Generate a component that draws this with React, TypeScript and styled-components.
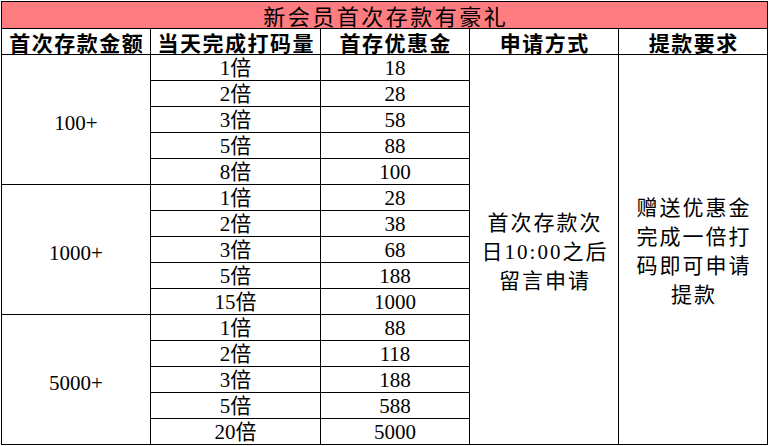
import React from "react";
import styled, { createGlobalStyle } from "styled-components";

const GlobalStyle = createGlobalStyle`
  html, body {
    margin: 0;
    padding: 0;
    background: #ffffff;
  }
  body {
    font-family: "Liberation Serif", "Noto Sans CJK SC", serif;
    color: #000;
  }
`;

const Wrapper = styled.div`
  padding: 1px 0 0 1px;
`;

const Sheet = styled.table`
  border-collapse: separate;
  border-spacing: 0;
  table-layout: fixed;
  width: 767px;
  border-top: 1px solid #000;
  border-left: 1px solid #000;
`;

const Col = styled.col<{ $w: number }>`
  width: ${(p) => p.$w}px;
`;

const Row = styled.tr<{ $h: number }>`
  height: ${(p) => p.$h}px;
`;

const BaseCell = styled.td`
  box-sizing: border-box;
  padding: 0;
  border-right: 1px solid #000;
  border-bottom: 1px solid #000;
  text-align: center;
  white-space: nowrap;
`;

const TitleCell = styled(BaseCell)`
  background: #ff7c80;
  font-family: "Noto Sans CJK SC", sans-serif;
  font-size: 22px;
  letter-spacing: 2.5px;
  padding-left: 2.5px;
  line-height: 25px;
  vertical-align: bottom;
`;

const HeadCell = styled(BaseCell)`
  font-family: "Noto Sans CJK SC", sans-serif;
  font-weight: 700;
  font-size: 21px;
  letter-spacing: 1.5px;
  padding-left: 1.5px;
  line-height: 24px;
  vertical-align: bottom;
`;

const DataCell = styled(BaseCell)`
  font-size: 21px;
  line-height: 24px;
  vertical-align: bottom;
`;

const GroupCell = styled(BaseCell)`
  font-size: 21px;
  line-height: 24px;
  vertical-align: middle;
  padding-top: 6px;
`;

const NoteCell = styled(BaseCell)`
  font-size: 21px;
  line-height: 29px;
  letter-spacing: 2px;
  padding-left: 2px;
  padding-top: 5px;
  vertical-align: middle;
`;

type Group = { amount: string; rows: [string, string][] };

const groups: Group[] = [
  {
    amount: "100+",
    rows: [
      ["1倍", "18"],
      ["2倍", "28"],
      ["3倍", "58"],
      ["5倍", "88"],
      ["8倍", "100"],
    ],
  },
  {
    amount: "1000+",
    rows: [
      ["1倍", "28"],
      ["2倍", "38"],
      ["3倍", "68"],
      ["5倍", "188"],
      ["15倍", "1000"],
    ],
  },
  {
    amount: "5000+",
    rows: [
      ["1倍", "88"],
      ["2倍", "118"],
      ["3倍", "188"],
      ["5倍", "588"],
      ["20倍", "5000"],
    ],
  },
];

const totalRows = groups.reduce((n, g) => n + g.rows.length, 0);

export default function App() {
  return (
    <>
      <GlobalStyle />
      <Wrapper>
        <Sheet>
          <colgroup>
            <Col $w={149} />
            <Col $w={170} />
            <Col $w={149} />
            <Col $w={149} />
            <Col $w={149} />
          </colgroup>
          <tbody>
            <Row $h={27}>
              <TitleCell colSpan={5}>新会员首次存款有豪礼</TitleCell>
            </Row>
            <Row $h={26}>
              <HeadCell>首次存款金额</HeadCell>
              <HeadCell>当天完成打码量</HeadCell>
              <HeadCell>首存优惠金</HeadCell>
              <HeadCell>申请方式</HeadCell>
              <HeadCell>提款要求</HeadCell>
            </Row>
            {groups.map((g, gi) =>
              g.rows.map((r, ri) => (
                <Row $h={26} key={`${gi}-${ri}`}>
                  {ri === 0 && (
                    <GroupCell rowSpan={g.rows.length}>{g.amount}</GroupCell>
                  )}
                  <DataCell>{r[0]}</DataCell>
                  <DataCell>{r[1]}</DataCell>
                  {gi === 0 && ri === 0 && (
                    <>
                      <NoteCell rowSpan={totalRows}>
                        首次存款次
                        <br />
                        日10:00之后
                        <br />
                        留言申请
                      </NoteCell>
                      <NoteCell rowSpan={totalRows}>
                        赠送优惠金
                        <br />
                        完成一倍打
                        <br />
                        码即可申请
                        <br />
                        提款
                      </NoteCell>
                    </>
                  )}
                </Row>
              ))
            )}
          </tbody>
        </Sheet>
      </Wrapper>
    </>
  );
}
